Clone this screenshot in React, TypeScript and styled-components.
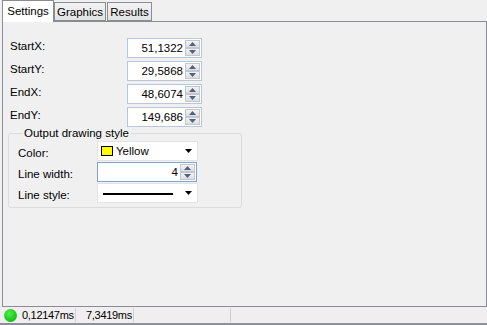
import styled, { createGlobalStyle } from "styled-components"

// Global //

const GlobalStyle = createGlobalStyle`
	html, body {
		margin: 0;
		padding: 0;
		background: #f0f0f0;
	}
	body {
		font-family: "Liberation Sans", Arial, sans-serif;
		font-size: 11px;
		color: #000;
	}
`

// Components //

const coords = [
	{ label: "StartX:", value: "51,1322" },
	{ label: "StartY:", value: "29,5868" },
	{ label: "EndX:", value: "48,6074" },
	{ label: "EndY:", value: "149,686" }
]

export default function App() {
	return (
		<>
			<GlobalStyle />
			<Window>
				<TabStrip>
					<Tab $active $width={52}>Settings</Tab>
					<Tab $width={52}>Graphics</Tab>
					<Tab $width={45}>Results</Tab>
				</TabStrip>
				<TabPage>
					<Fields>
						{coords.map((c) => (
							<FieldRow key={c.label}>
								<FieldLabel>{c.label}</FieldLabel>
								<NumericBox $width={75}>
									<NumericValue>{c.value}</NumericValue>
									<Spinner />
								</NumericBox>
							</FieldRow>
						))}
					</Fields>
					<GroupBox>
						<GroupTitle>Output drawing style</GroupTitle>
						<GroupRow>
							<GroupLabel>Color:</GroupLabel>
							<Combo>
								<Swatch />
								<ComboText>Yellow</ComboText>
								<DropArrow />
							</Combo>
						</GroupRow>
						<GroupRow>
							<GroupLabel>Line width:</GroupLabel>
							<NumericBox $width={100} $focused>
								<NumericValue>4</NumericValue>
								<Spinner />
							</NumericBox>
						</GroupRow>
						<GroupRow>
							<GroupLabel>Line style:</GroupLabel>
							<Combo>
								<LineSample />
								<DropArrow />
							</Combo>
						</GroupRow>
					</GroupBox>
				</TabPage>
				<StatusBar>
					<StatusLed />
					<StatusCell $width={54}>0,12147ms</StatusCell>
					<StatusCell $width={48}>7,3419ms</StatusCell>
					<StatusCell $width={87} />
				</StatusBar>
			</Window>
		</>
	)
}

function Spinner() {
	return (
		<SpinColumn>
			<SpinButton>
				<svg width="7" height="4" viewBox="0 0 7 4">
					<path d="M0 4 L3.5 0 L7 4 Z" fill="#4d6185" />
				</svg>
			</SpinButton>
			<SpinButton>
				<svg width="7" height="4" viewBox="0 0 7 4">
					<path d="M0 0 L3.5 4 L7 0 Z" fill="#4d6185" />
				</svg>
			</SpinButton>
		</SpinColumn>
	)
}

function DropArrow() {
	return (
		<ArrowWrap>
			<svg width="7" height="4" viewBox="0 0 7 4">
				<path d="M0 0 L7 0 L3.5 4 Z" fill="#000" />
			</svg>
		</ArrowWrap>
	)
}

// Styled Components //

const Window = styled.div`
	width: 487px;
	height: 325px;
	display: flex;
	flex-direction: column;
	background: #f0f0f0;
	overflow: hidden;
`

const TabStrip = styled.div`
	display: flex;
	align-items: flex-end;
	height: 21px;
	padding-left: 2px;
	position: relative;
	z-index: 1;
`

const Tab = styled.div<{ $active?: boolean; $width: number }>`
	box-sizing: border-box;
	width: ${({ $width }) => $width}px;
	height: ${({ $active }) => ($active ? "22px" : "19px")};
	margin-bottom: ${({ $active }) => ($active ? "-1px" : "0")};
	margin-right: ${({ $active }) => ($active ? "0" : "1px")};
	padding-top: ${({ $active }) => ($active ? "4px" : "3px")};
	border: 1px solid #898c95;
	border-bottom: ${({ $active }) => ($active ? "none" : "1px solid #898c95")};
	background: ${({ $active }) => ($active ? "#ffffff" : "linear-gradient(#f2f2f2, #e3e3e3)")};
	white-space: nowrap;
	text-align: center;
	font-size: 11.5px;
`

const TabPage = styled.div`
	flex: 1;
	margin: 0 0 0 2px;
	border: 1px solid #898c95;
	width: 485px;
	box-sizing: border-box;
	background: #f0f0f0;
	padding: 16px 0 0 4px;
	display: flex;
	flex-direction: column;
`

const Fields = styled.div`
	display: flex;
	flex-direction: column;
	gap: 3px;
`

const FieldRow = styled.div`
	display: flex;
	align-items: flex-start;
	height: 20px;
`

const FieldLabel = styled.div`
	width: 117px;
	padding: 2px 0 0 3px;
	font-size: 11.5px;
`

const NumericBox = styled.div<{ $width: number; $focused?: boolean }>`
	box-sizing: border-box;
	width: ${({ $width }) => $width}px;
	height: 20px;
	background: #fff;
	border: 1px solid ${({ $focused }) => ($focused ? "#7ea4d8" : "#b9c5d8")};
	display: flex;
	align-items: center;
	padding: 1px 1px 1px 2px;
`

const NumericValue = styled.div`
	flex: 1;
	text-align: right;
	padding-right: 2px;
	font-size: 11.5px;
`

const SpinColumn = styled.div`
	display: flex;
	flex-direction: column;
	width: 15px;
	height: 16px;
`

const SpinButton = styled.div`
	box-sizing: border-box;
	flex: 1;
	display: flex;
	align-items: center;
	justify-content: center;
	border: 1px solid #c2c7cf;
	background: linear-gradient(#f3f3f3, #dedede);
`

const GroupBox = styled.fieldset`
	box-sizing: border-box;
	width: 234px;
	margin: 0 0 0 1px;
	padding: 2px 0 4px 9px;
	border: 1px solid #dcdcdc;
	border-radius: 3px;
	display: flex;
	flex-direction: column;
	gap: 1px;
`

const GroupTitle = styled.legend`
	padding: 0 2px 0 1px;
	margin-left: 5px;
	font-size: 11.5px;
`

const GroupRow = styled.div`
	display: flex;
	align-items: center;
	height: 20px;
`

const GroupLabel = styled.div`
	width: 79px;
	padding-top: 3px;
	font-size: 11.5px;
`

const Combo = styled.div`
	box-sizing: border-box;
	width: 101px;
	height: 20px;
	background: #fff;
	border: 1px solid #e3e3e3;
	display: flex;
	align-items: center;
	padding-left: 3px;
`

const Swatch = styled.div`
	box-sizing: border-box;
	width: 12px;
	height: 10px;
	background: #ffff00;
	border: 1px solid #000;
	margin-right: 3px;
`

const ComboText = styled.div`
	flex: 1;
	font-size: 11.5px;
`

const LineSample = styled.div`
	flex: 1;
	height: 2px;
	background: #000;
	margin: 1px 6px 0 2px;
`

const ArrowWrap = styled.div`
	width: 18px;
	display: flex;
	align-items: center;
	justify-content: center;
	margin-left: auto;
`

const StatusBar = styled.div`
	height: 18px;
	box-sizing: border-box;
	display: flex;
	align-items: center;
	background: #f0eeee;
	border-bottom: 2px solid #8b919a;
	padding-left: 4px;
`

const StatusLed = styled.div`
	flex-shrink: 0;
	width: 13px;
	height: 13px;
	border-radius: 50%;
	background: radial-gradient(circle at 40% 35%, #4cf04c, #16c016 70%, #0c9c0c);
	margin-right: 5px;
`

const StatusCell = styled.div<{ $width: number }>`
	flex-shrink: 0;
	box-sizing: border-box;
	width: ${({ $width }) => $width}px;
	height: 14px;
	border-right: 1px solid #cfcfcf;
	font-size: 11px;
	letter-spacing: -0.3px;
	line-height: 14px;
	margin-right: 10px;
	white-space: nowrap;
`
